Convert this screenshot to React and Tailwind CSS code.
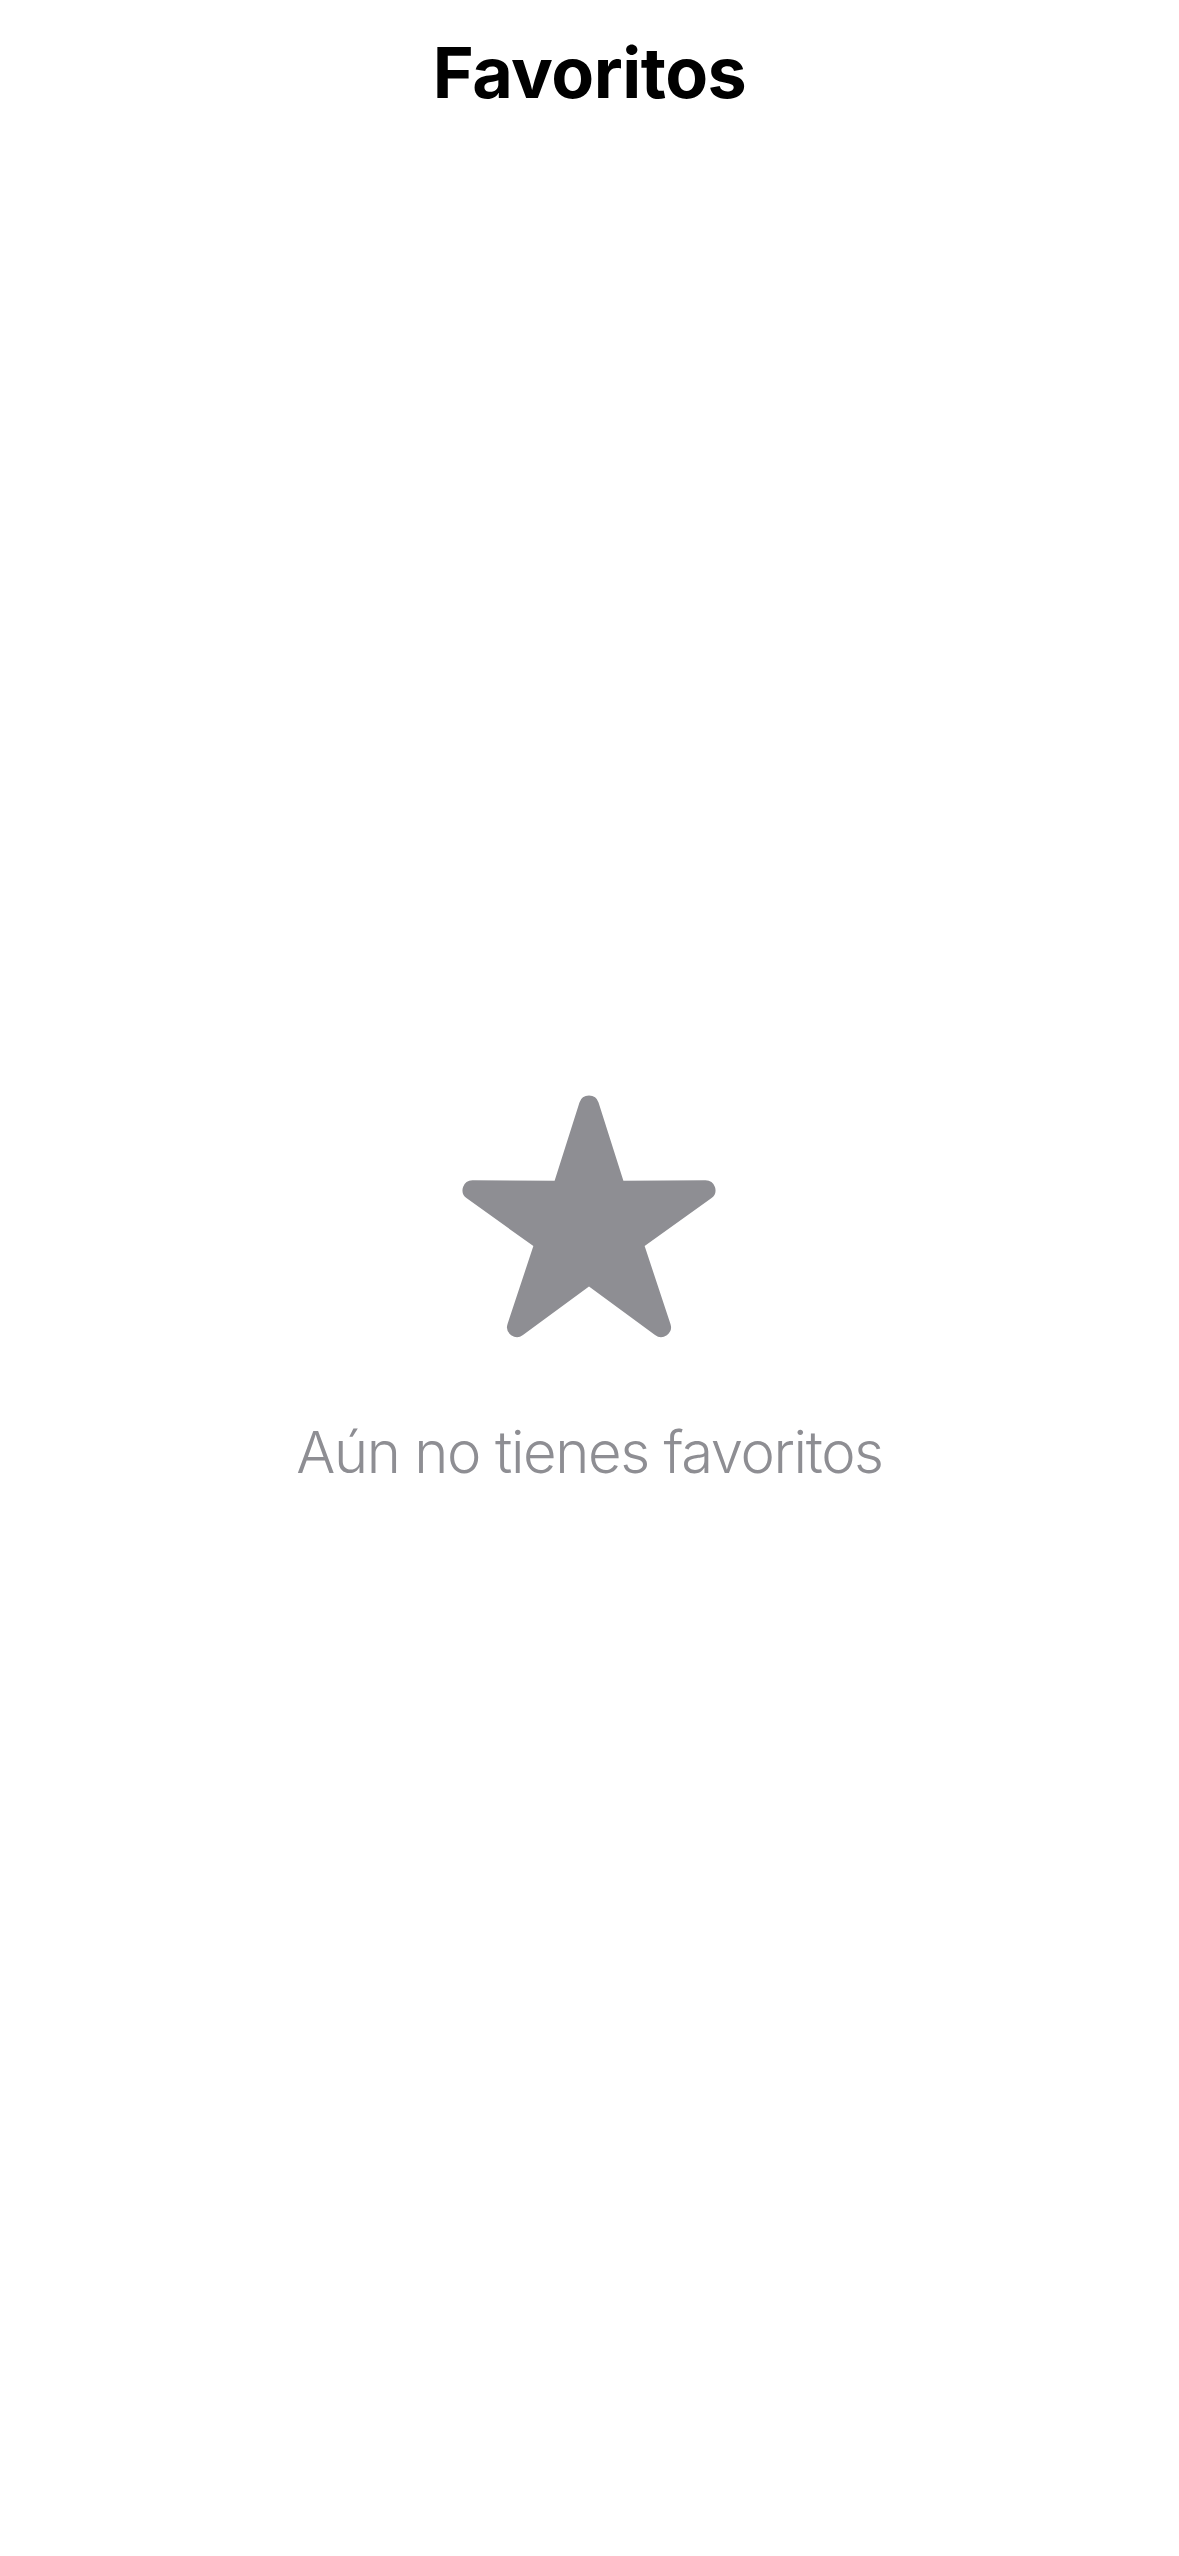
// rounded five-point star, like the SF "star.fill" symbol
function starPath(cx, cy, outer, inner, round) {
  const pts = [];
  for (let i = 0; i < 10; i++) {
    const a = ((-90 + 36 * i) * Math.PI) / 180;
    const rad = i % 2 === 0 ? outer : inner;
    pts.push([cx + rad * Math.cos(a), cy + rad * Math.sin(a)]);
  }
  const f = (n) => n.toFixed(2);
  let d = "";
  for (let i = 0; i < 10; i += 2) {
    const v = pts[i];
    const p = pts[(i + 9) % 10];
    const n = pts[i + 1];
    const u1 = [p[0] - v[0], p[1] - v[1]];
    const u2 = [n[0] - v[0], n[1] - v[1]];
    const l1 = Math.hypot(u1[0], u1[1]);
    const l2 = Math.hypot(u2[0], u2[1]);
    const cos = (u1[0] * u2[0] + u1[1] * u2[1]) / (l1 * l2);
    const half = Math.acos(cos) / 2;
    const t = round / Math.tan(half);
    const t1 = [v[0] + (u1[0] / l1) * t, v[1] + (u1[1] / l1) * t];
    const t2 = [v[0] + (u2[0] / l2) * t, v[1] + (u2[1] / l2) * t];
    d += `${i === 0 ? "M" : "L"} ${f(t1[0])} ${f(t1[1])} `;
    d += `A ${round} ${round} 0 0 1 ${f(t2[0])} ${f(t2[1])} `;
    d += `L ${f(n[0])} ${f(n[1])} `;
  }
  return d + "Z";
}

const STAR = starPath(130, 138, 155.4, 58.5, 10);

export default function App() {
  return (
    <div className="min-h-screen w-full bg-white flex flex-col items-center font-['Inter','Liberation_Sans',sans-serif]">
      {/* Header */}
      <h1 className="pt-[38px] text-[70px] leading-[70px] font-bold text-black tracking-[-0.5px]">
        Favoritos
      </h1>

      {/* Empty state */}
      <div className="mt-[982px] flex flex-col items-center">
        <svg width="260" height="250" viewBox="0 0 260 250" className="text-[#8e8e93]" fill="currentColor">
          <path d={STAR} />
        </svg>
        <p className="mt-[83px] text-[58px] leading-[58px] font-light text-[#8e8e93] tracking-[-1.4px]">
          Aún no tienes favoritos
        </p>
      </div>
    </div>
  );
}
